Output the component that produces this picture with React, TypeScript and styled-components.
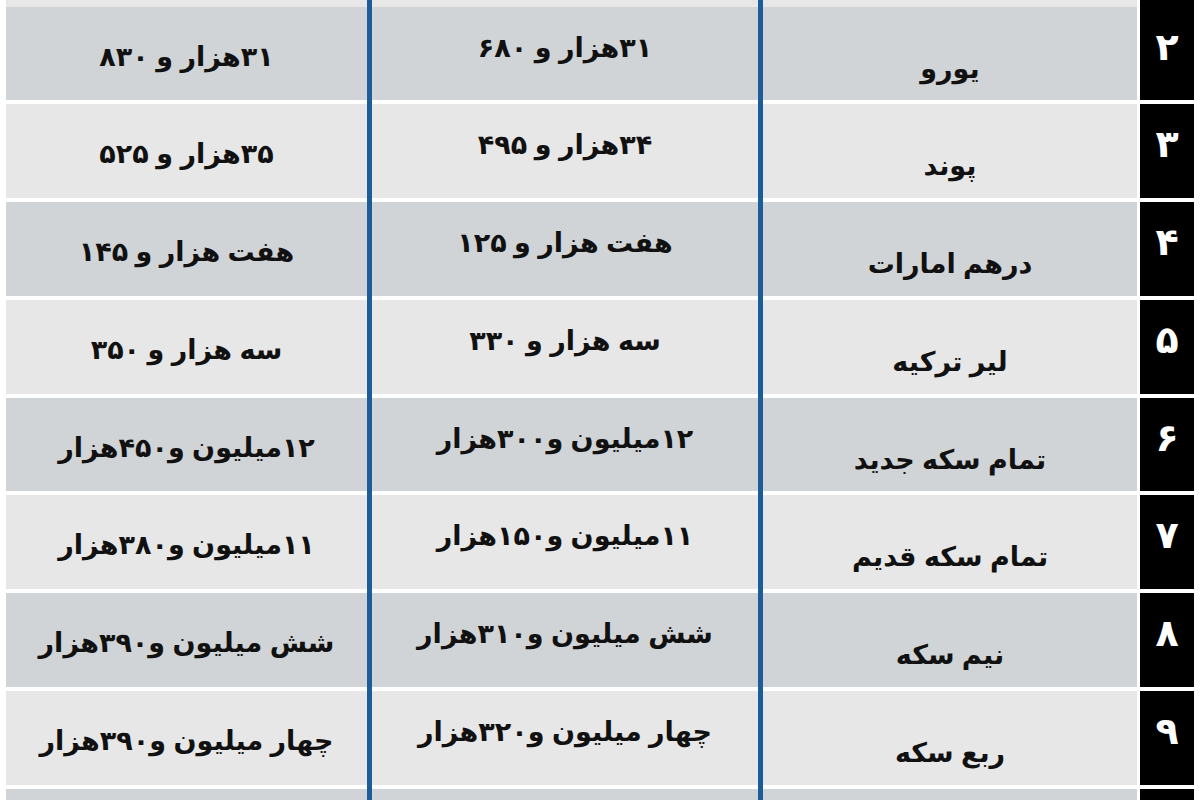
import React from "react";
import styled, { createGlobalStyle } from "styled-components";

const Global = createGlobalStyle`
  html, body { margin: 0; padding: 0; background: #ffffff; }
  body { overflow: hidden; font-family: "DejaVu Sans", "Noto Sans", sans-serif; }
`;

const Frame = styled.div`
  width: 1200px;
  height: 800px;
  overflow: hidden;
  background: #ffffff;
`;

const Table = styled.div`
  padding: 0 6px;
  display: flex;
  flex-direction: column;
`;

const Row = styled.div<{ $h: number }>`
  display: grid;
  grid-template-columns: 361px 5px 386px 5px 374px 3px 54px;
  height: ${(p) => p.$h}px;
  flex-shrink: 0;
`;

const Cell = styled.div<{ $shade: boolean; $top: number }>`
  background: ${(p) => (p.$shade ? "#d1d4d7" : "#e7e7e7")};
  border-bottom: 4px solid #ffffff;
  display: flex;
  justify-content: center;
  align-items: flex-start;
  padding-top: ${(p) => p.$top}px;
  direction: rtl;
  font-weight: bold;
  font-size: 27px;
  line-height: 32px;
  word-spacing: -2px;
  color: #111111;
  white-space: nowrap;
  overflow: hidden;
`;

const Rule = styled.div`
  background: #1c5d99;
`;

const Spacer = styled.div`
  background: #ffffff;
`;

const Num = styled.div`
  background: #000000;
  border-bottom: 4px solid #ffffff;
  display: flex;
  justify-content: center;
  align-items: flex-start;
  padding-top: 20px;
  color: #ffffff;
  font-weight: bold;
  font-size: 38px;
  line-height: 40px;
`;

type Item = { n: string; name: string; buy: string; sell: string };

const rows: Item[] = [
  { n: "۲", name: "یورو", buy: "۳۱هزار و ۶۸۰", sell: "۳۱هزار و ۸۳۰" },
  { n: "۳", name: "پوند", buy: "۳۴هزار و ۴۹۵", sell: "۳۵هزار و ۵۲۵" },
  { n: "۴", name: "درهم امارات", buy: "هفت هزار و ۱۲۵", sell: "هفت هزار و ۱۴۵" },
  { n: "۵", name: "لیر ترکیه", buy: "سه هزار و ۳۳۰", sell: "سه هزار و ۳۵۰" },
  { n: "۶", name: "تمام سکه جدید", buy: "۱۲میلیون و۳۰۰هزار", sell: "۱۲میلیون و۴۵۰هزار" },
  { n: "۷", name: "تمام سکه قدیم", buy: "۱۱میلیون و۱۵۰هزار", sell: "۱۱میلیون و۳۸۰هزار" },
  { n: "۸", name: "نیم سکه", buy: "شش میلیون و۳۱۰هزار", sell: "شش میلیون و۳۹۰هزار" },
  { n: "۹", name: "ربع سکه", buy: "چهار میلیون و۳۲۰هزار", sell: "چهار میلیون و۳۹۰هزار" },
];

const EdgeRow = ({ h, shade }: { h: number; shade: boolean }) => (
  <Row $h={h}>
    <Cell $shade={shade} $top={0} />
    <Rule />
    <Cell $shade={shade} $top={0} />
    <Rule />
    <Cell $shade={shade} $top={0} />
    <Spacer />
    <Num />
  </Row>
);

export default function App() {
  return (
    <Frame>
      <Global />
      <Table>
        <EdgeRow h={6.5} shade={false} />
        {rows.map((r, i) => {
          const shade = i % 2 === 0;
          return (
            <Row key={r.n} $h={97.8}>
              <Cell $shade={shade} $top={34}>{r.sell}</Cell>
              <Rule />
              <Cell $shade={shade} $top={25}>{r.buy}</Cell>
              <Rule />
              <Cell $shade={shade} $top={46}>{r.name}</Cell>
              <Spacer />
              <Num>{r.n}</Num>
            </Row>
          );
        })}
        <EdgeRow h={40} shade={true} />
      </Table>
    </Frame>
  );
}
